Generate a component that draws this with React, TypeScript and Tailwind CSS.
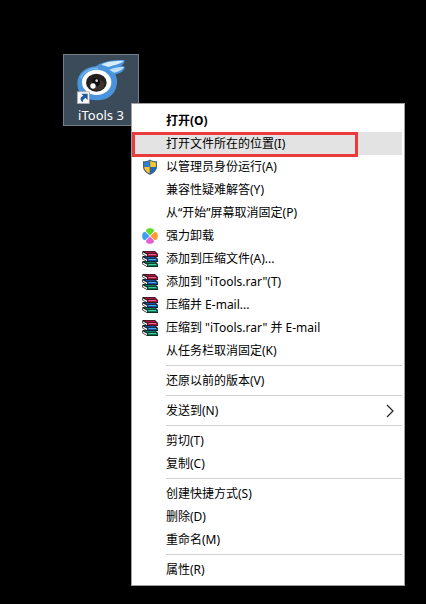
import React from "react";

function ShieldIcon() {
  return (
    <svg viewBox="0 0 16 16" className="size-4" aria-hidden="true">
      <path d="M8 0.500C6 2 3.500 2.300 1 2.300V8C1 11.500 4.500 14.300 8 16C11.500 14.300 15 11.500 15 8V2.300C12.500 2.300 10 2 8 0.500Z" fill="#47607c" />
      <path d="M7.700 1.800C6 3 4 3.400 2.100 3.400V8H7.700Z" fill="#2d7fd0" />
      <path d="M8.300 1.800C10 3 12 3.400 13.900 3.400V8H8.300Z" fill="#fbc926" />
      <path d="M7.700 8H2.100C2.200 11 5 13.200 7.700 14.600Z" fill="#fbc02a" />
      <path d="M8.300 8H13.900C13.800 11 11 13.200 8.300 14.600Z" fill="#1f68bb" />
    </svg>
  );
}

function CloverIcon() {
  return (
    <svg viewBox="0 0 16 16" className="size-4" aria-hidden="true">
      <path d="M8 7.600L4.300 3.700C3.500 1.500 5 0.200 8 0.200S12.500 1.500 11.700 3.700Z" fill="#5edb2c" />
      <path d="M8.400 8L12.300 4.300C14.500 3.500 15.800 5 15.800 8S14.500 12.500 12.300 11.700Z" fill="#ff9a35" />
      <path d="M8 8.400L11.700 12.300C12.500 14.500 11 15.800 8 15.800S3.500 14.500 4.300 12.300Z" fill="#e95bd3" />
      <path d="M7.600 8L3.700 11.700C1.500 12.500 0.200 11 0.200 8S1.500 3.500 3.700 4.300Z" fill="#3c9df5" />
    </svg>
  );
}

function Book({ y, cover, light }: { y: number; cover: string; light: string }) {
  return (
    <g transform={`translate(0 ${y})`}>
      <path d="M0 1L1 0H13L16 3V6H5L0 3Z" fill="#151515" />
      <path d="M1.500 0.500H12.700L14.500 2.400H5Z" fill={cover} />
      <path d="M0.600 1.200L5 3.400V5.200L0.600 2.800Z" fill="#f4f4f4" />
      <path d="M5.500 3H15.600V5.300H5.500Z" fill={cover} />
      <path d="M6.500 3H14V4H6.500Z" fill={light} />
    </g>
  );
}

function BooksIcon() {
  return (
    <svg viewBox="0 0 16 16" className="size-4" aria-hidden="true">
      <Book y={10} cover="#0a7a58" light="#43cfa2" />
      <Book y={5} cover="#16509f" light="#49aee6" />
      <Book y={0} cover="#a2163f" light="#ee5f92" />
    </svg>
  );
}

function ITools() {
  return (
    <svg viewBox="60 30 153 138" className="h-[46px] w-[51px] shrink-0" aria-hidden="true">
      <path d="M64 108C64 76 88 57 120 55C139 40 165 36 205 36C207 44 202 50 195 53C204 53 208 55 206 61C203 71 190 77 178 79C184 91 185 102 181 117C174 143 151 157 123 157C89 157 64 137 64 108Z" fill="#4a94de" />
      <path d="M136 50C152 40 176 38 202 38C198 48 174 50 158 57Z" fill="#d5ecfd" />
      <path d="M160 65C174 58 188 56 204 57C198 67 187 72 174 74Z" fill="#c0e0fa" />
      <path d="M74 91C83 68 105 61 126 60" fill="none" stroke="#78b7ef" strokeWidth="4" />
      <ellipse cx="122" cy="103" rx="44" ry="38" fill="#fff" />
      <ellipse cx="121" cy="104" rx="31" ry="27" fill="#252020" />
      <ellipse cx="124" cy="110" rx="22" ry="16" fill="#3d322e" />
      <circle cx="120" cy="103" r="12" fill="#100f10" />
      <circle cx="111" cy="114" r="8" fill="#fff" />
      <circle cx="122" cy="98" r="4" fill="#d5d5d5" />
      <path d="M64 131H100V167H64Z" fill="#fafafa" stroke="#9a9da0" strokeWidth="2" />
      <path d="M76 137H95V156L89 150C82 153 80 157 81 163C70 155 72 147 82 143Z" fill="#245a9e" />
    </svg>
  );
}

type Item = {
  label: string;
  icon?: React.ReactNode;
  bold?: boolean;
  active?: boolean;
  submenu?: boolean;
};

const groups: Item[][] = [
  [
    { label: "打开(O)", bold: true },
    { label: "打开文件所在的位置(I)", active: true },
    { label: "以管理员身份运行(A)", icon: <ShieldIcon /> },
    { label: "兼容性疑难解答(Y)" },
    { label: "从“开始”屏幕取消固定(P)" },
    { label: "强力卸载", icon: <CloverIcon /> },
    { label: "添加到压缩文件(A)...", icon: <BooksIcon /> },
    { label: '添加到 "iTools.rar"(T)', icon: <BooksIcon /> },
    { label: "压缩并 E-mail...", icon: <BooksIcon /> },
    { label: '压缩到 "iTools.rar" 并 E-mail', icon: <BooksIcon /> },
    { label: "从任务栏取消固定(K)" },
  ],
  [{ label: "还原以前的版本(V)" }],
  [{ label: "发送到(N)", submenu: true }],
  [{ label: "剪切(T)" }, { label: "复制(C)" }],
  [{ label: "创建快捷方式(S)" }, { label: "删除(D)" }, { label: "重命名(M)" }],
  [{ label: "属性(R)" }],
];

function MenuRow({ item }: { item: Item }) {
  return (
    <li role="none" className="relative">
      <button
        type="button"
        role="menuitem"
        className={`flex h-[23px] w-full items-center pr-2 text-left ${item.active ? "bg-[#e3e3e3]" : ""} ${item.bold ? "font-bold" : ""}`}
      >
        <span className="flex w-8 shrink-0 pl-2">{item.icon}</span>
        <span className="grow whitespace-nowrap">{item.label}</span>
        {item.submenu && (
          <svg viewBox="0 0 8 14" className="h-3.5 w-2" aria-hidden="true">
            <path d="M1 1L7 7L1 13" fill="none" stroke="#222" strokeWidth="1.200" />
          </svg>
        )}
      </button>
      {item.active && (
        <span className="pointer-events-none absolute -left-0.5 top-0 h-[25px] w-[226px] border-3 border-[#e93b3b]" />
      )}
    </li>
  );
}

export default function App() {
  return (
    <main className="relative min-h-screen overflow-hidden bg-black pl-[63px] pt-[54px] font-['Noto_Sans','Noto_Sans_CJK_SC',sans-serif] text-xs">
      <button
        type="button"
        className="flex h-[72px] w-[76px] flex-col items-center border border-[#71808d] bg-[#3c4b5a] pt-[3px] text-white"
      >
        <ITools />
        <span className="text-[13px] leading-[22px]">iTools 3</span>
      </button>
      <ul
        role="menu"
        aria-label="iTools 3"
        className="absolute left-[131px] top-[103px] w-[274px] border border-[#a0a0a0] bg-white px-0.5 pb-1 pt-[5px] text-black"
      >
        {groups.map((group, index) => (
          <React.Fragment key={group[0].label}>
            {index > 0 && <li role="separator" className="my-[3px] ml-8 h-px bg-[#d0d0d0]" />}
            {group.map((item) => (
              <MenuRow key={item.label} item={item} />
            ))}
          </React.Fragment>
        ))}
      </ul>
    </main>
  );
}
